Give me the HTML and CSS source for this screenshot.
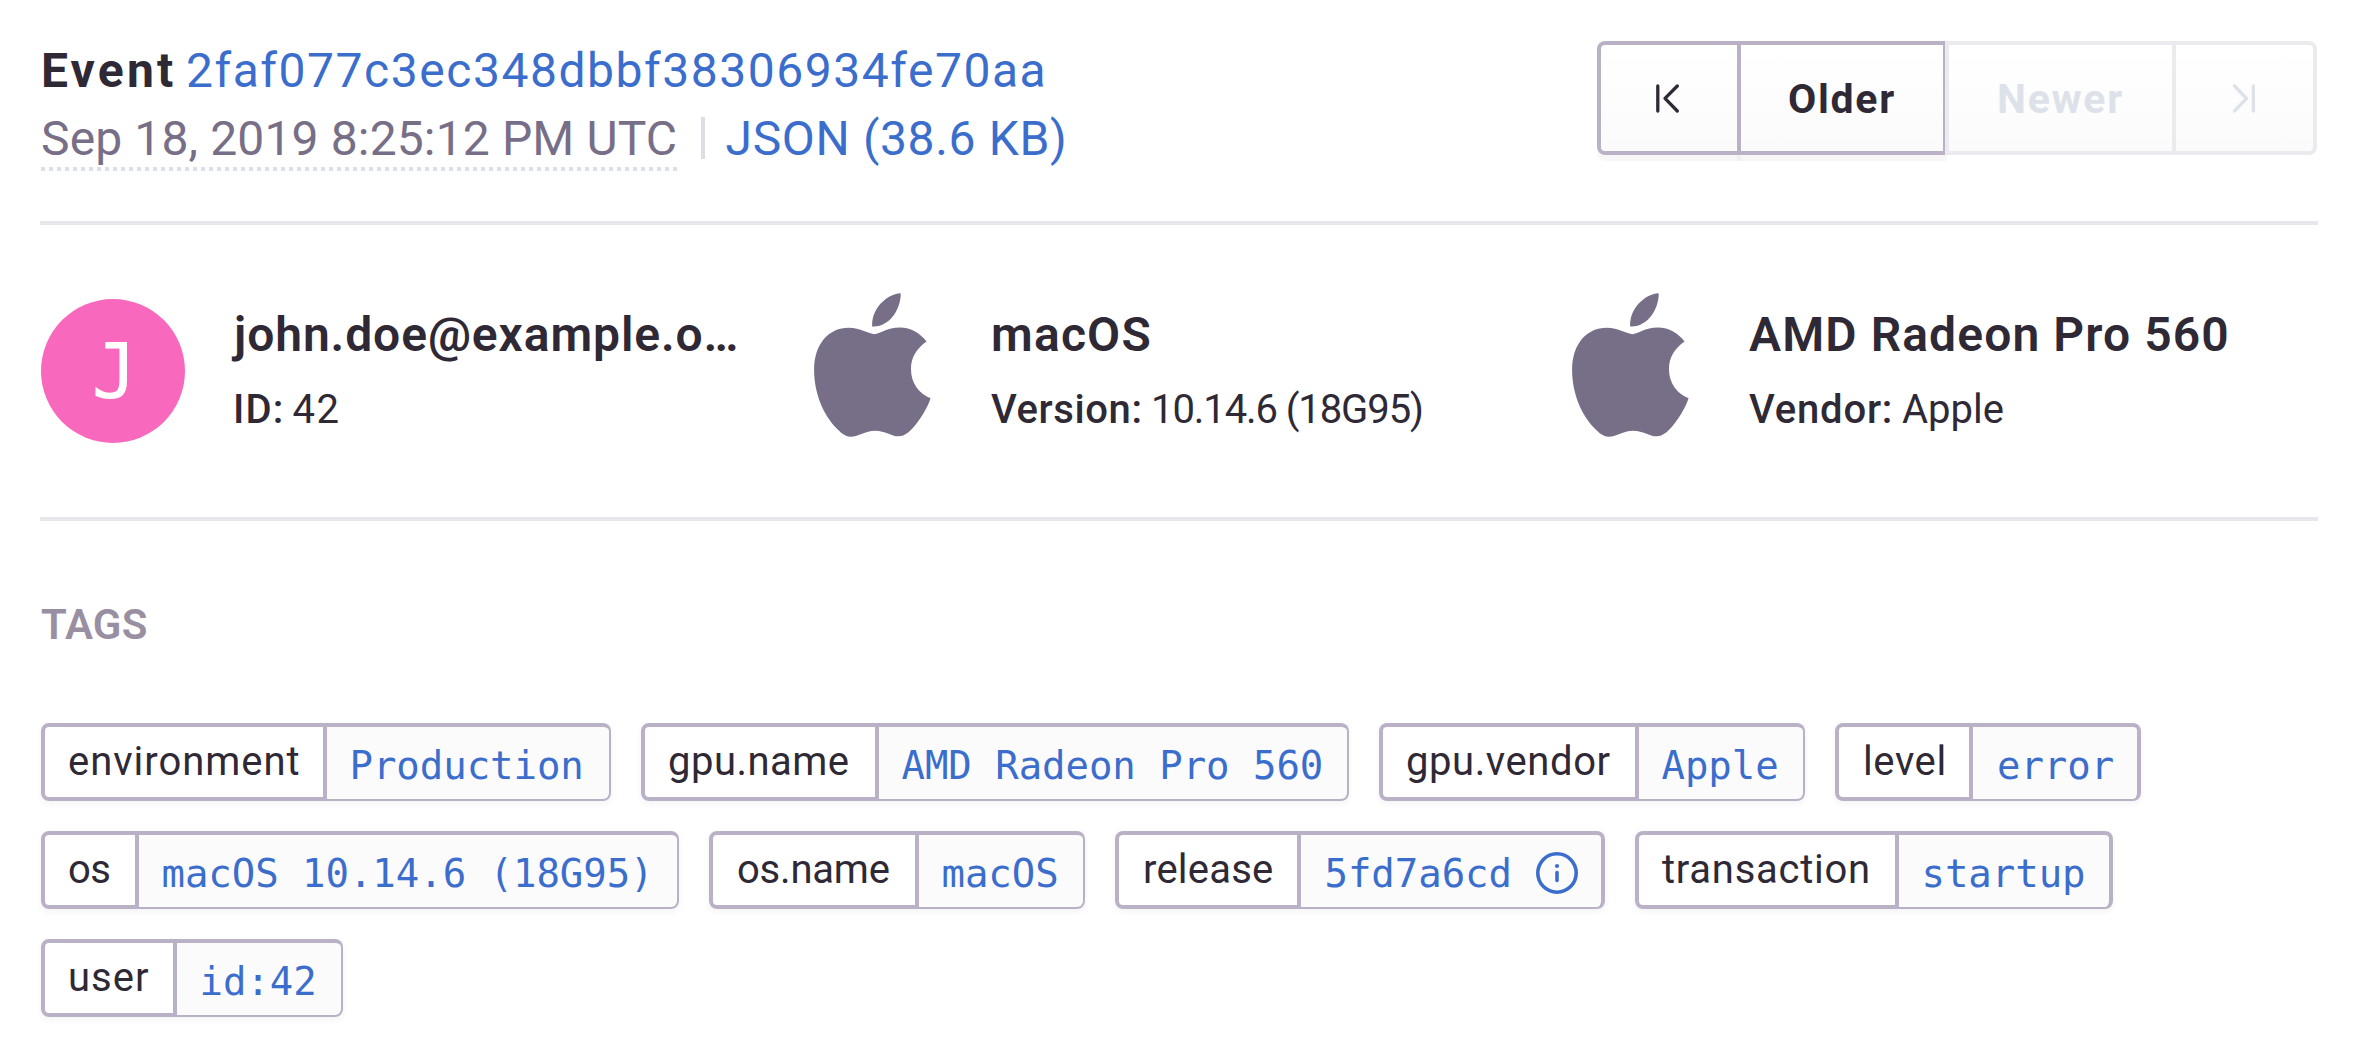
FILE: index.html
```
<!DOCTYPE html>
<html lang="en">
<head>
<meta charset="utf-8">
<title>Event details</title>
<link rel="stylesheet" href="styles.css">
</head>
<body>
<svg width="0" height="0" class="defs">
  <symbol id="apple" viewBox="42 38 352 434">
    <path d="M303 39C304 85 270 142 217 139C213 90 257 42 303 39Z"/>
    <path d="M224 162C240 162 262 142 300 142C335 142 362 160 381 184C352 204 334 230 334 267C334 310 358 341 393 355C384 383 360 424 336 449C325 460 313 470 297 470C274 470 257 453 226 453C194 453 178 471 152 471C135 471 122 458 108 444C70 405 42 340 42 270C42 190 88 143 146 143C182 143 207 162 224 162Z"/>
  </symbol>
</svg>
<header class="header">
  <div class="event">
    <div class="event-line"><strong class="event-label">Event</strong><a class="event-id">2faf077c3ec348dbbf38306934fe70aa</a></div>
    <div class="event-line"><span class="date">Sep 18, 2019 8:25:12 PM UTC</span><span class="separator"></span><a class="json">JSON (38.6 KB)</a></div>
  </div>
  <nav class="pager">
    <a class="button button-first"><svg width="28" height="32" viewBox="0 0 28 32"><path d="M2.8 3V28M22.3 3L10 15.4L22.3 28"/></svg></a>
    <a class="button button-older">Older</a>
    <a class="button button-newer disabled">Newer</a>
    <a class="button button-last disabled"><svg width="28" height="32" viewBox="0 0 28 32"><path d="M22.3 3V28M3.5 3L15.5 15.4L3.5 28"/></svg></a>
  </nav>
</header>
<section class="contexts">
  <div class="context">
    <div class="context-icon"><span class="avatar">J</span></div>
    <div class="context-body"><h3 class="email">john.doe@example.o…</h3><p><b class="label-id">ID:</b><span class="value-id">42</span></p></div>
  </div>
  <div class="context">
    <div class="context-icon"><svg class="apple"><use href="#apple"/></svg></div>
    <div class="context-body"><h3 class="os-title">macOS</h3><p><b class="label-version">Version:</b><span class="value-version">10.14.6 (18G95)</span></p></div>
  </div>
  <div class="context">
    <div class="context-icon"><svg class="apple"><use href="#apple"/></svg></div>
    <div class="context-body"><h3 class="gpu-title">AMD Radeon Pro 560</h3><p><b class="label-vendor">Vendor:</b><span>Apple</span></p></div>
  </div>
</section>
<section class="tags-section">
  <h2>TAGS</h2>
  <div class="tags">
    <div class="tag tag-environment"><span class="key">environment</span><a class="value">Production</a></div>
    <div class="tag tag-gpu-name"><span class="key">gpu.name</span><a class="value">AMD Radeon Pro 560</a></div>
    <div class="tag tag-gpu-vendor"><span class="key">gpu.vendor</span><a class="value">Apple</a></div>
    <div class="tag tag-level"><span class="key">level</span><a class="value wide-edge">error</a></div>
    <div class="tag tag-os"><span class="key">os</span><a class="value">macOS 10.14.6 (18G95)</a></div>
    <div class="tag tag-os-name"><span class="key">os.name</span><a class="value">macOS</a></div>
    <div class="tag tag-release"><span class="key">release</span><a class="value wide-edge">5fd7a6cd<svg class="info" width="42" height="42" viewBox="0 0 42 42"><circle cx="21" cy="21" r="19.2"/><path d="M21 20.5V28.5"/><circle class="dot" cx="21" cy="14" r="2.1"/></svg></a></div>
    <div class="tag tag-transaction"><span class="key">transaction</span><a class="value wide-edge">startup</a></div>
    <div class="tag tag-user"><span class="key">user</span><a class="value">id:42</a></div>
  </div>
</section>
</body>
</html>
```
FILE: styles.css
```
* { box-sizing: border-box; margin: 0; }
body {
  width: 2358px;
  height: 1058px;
  padding: 0 40px;
  background: #fff;
  color: #2f2936;
  font: 400 48px Roboto, sans-serif;
  overflow: hidden;
  white-space: nowrap;
}
.defs { display: block; height: 0; }
a { color: #3b6ecc; text-decoration: none; }

.header {
  display: flex;
  justify-content: space-between;
  height: 225px;
  padding: 37px 1px 0;
  border-bottom: 4px solid #e9e7ee;
}
.event-line { display: flex; height: 68px; line-height: 68px; }
.event-label { width: 145px; font-weight: 700; letter-spacing: 3.2px; }
.event-id { letter-spacing: 1.53px; }
.date {
  width: 636px;
  height: 66px;
  padding-top: 5px;
  line-height: 57px;
  letter-spacing: 0.14px;
  color: #776e87;
  background: repeating-linear-gradient(90deg, #dce1e9 0 4px, transparent 4px 8px) bottom / 100% 4px no-repeat;
}
.separator { width: 4px; height: 42px; margin: 12px 20.5px 0 24px; background: #dddde5; }
.json { letter-spacing: 0.65px; }

.pager { display: flex; height: 114px; margin-top: 4px; }
.button {
  display: flex;
  align-items: center;
  justify-content: center;
  padding-top: 2px;
  border: 4px solid #bbb1c7;
  background: linear-gradient(#fff, #fbfbfc);
  box-shadow: 0 6px 0 rgba(47, 41, 54, 0.035);
  color: #2f2936;
  font-size: 41px;
  font-weight: 700;
  letter-spacing: 1.7px;
}
.button svg { fill: none; stroke: currentColor; stroke-width: 3.3; stroke-linecap: round; stroke-linejoin: round; }
.button-first { width: 144px; border-radius: 8px 0 0 8px; }
.button-older { width: 210px; margin-left: -4px; }
.button-newer { width: 231px; margin-left: -2px; }
.button-last { width: 145px; margin-left: -4px; border-radius: 0 8px 8px 0; }
.disabled { position: relative; border-color: #ebebef; box-shadow: none; color: #dde2ea; }

.contexts {
  display: grid;
  grid-template-columns: 758px 758px 1fr;
  height: 296px;
  padding: 74px 0 0 1px;
  border-bottom: 4px solid #e9e7ee;
}
.context { display: flex; }
.context-icon { width: 192px; }
.avatar {
  display: block;
  width: 144px;
  height: 144px;
  padding: 1px 0 0 3px;
  border-radius: 50%;
  background: #f868bc;
  color: #fff;
  font: 76px/144px "DejaVu Sans Mono", monospace;
  text-align: center;
}
.apple { display: block; width: 117px; height: 144px; margin: -6px 0 0 15px; fill: #776e87; }
.context-body { padding-top: 8px; line-height: 56px; }
h3 { font-size: 48px; font-weight: 600; }
p { display: flex; margin-top: 19px; font-size: 40px; }
b { font-weight: 500; }
.email { padding-left: 1px; letter-spacing: 0.9px; }
.os-title { letter-spacing: 1.2px; }
.gpu-title { letter-spacing: 1.1px; }
.label-id { width: 59.5px; letter-spacing: 1.2px; }
.value-id { letter-spacing: 1.6px; }
.label-version { width: 160px; letter-spacing: 0.6px; }
.value-version { letter-spacing: -1.09px; }
.label-vendor { width: 153px; letter-spacing: 0.8px; }

.tags-section { padding: 80px 0 0 1px; }
h2 { font-size: 42px; font-weight: 600; line-height: 48px; letter-spacing: 0.2px; color: #998fa2; }
.tags { display: flex; flex-wrap: wrap; gap: 30px; margin-top: 74px; }
.tag {
  display: grid;
  height: 78px;
  border-radius: 8px;
  box-shadow: 0 3px 6px rgba(47, 41, 54, 0.05);
}
.key, .value { display: flex; align-items: center; border: 4px solid #bbb1c7; }
.key { padding: 0 0 1px 23px; border-radius: 8px 0 0 8px; font-size: 40px; }
.value {
  padding: 4px 0 0 22.5px;
  border-width: 4px 2px 2px 0;
  border-radius: 0 8px 8px 0;
  background: #fbfbfc;
  font: 39px "DejaVu Sans Mono", monospace;
  letter-spacing: -0.05px;
}
.wide-edge { border-right-width: 4px; }
.info { margin-left: 24px; fill: none; stroke: currentColor; stroke-width: 3.6; stroke-linecap: round; }
.info .dot { fill: currentColor; stroke: none; }

.tag-environment { grid-template-columns: 286px 284px; }
.tag-environment .key { letter-spacing: 0.97px; }
.tag-gpu-name { grid-template-columns: 238px 470px; }
.tag-gpu-name .key { letter-spacing: 0.48px; }
.tag-gpu-vendor { grid-template-columns: 260px 166px; }
.tag-gpu-vendor .key { letter-spacing: 0.58px; }
.tag-level { grid-template-columns: 138px 168px; }
.tag-level .key { padding-left: 24px; letter-spacing: 0.6px; }
.tag-level .value { padding-left: 24px; }
.tag-os { grid-template-columns: 98px 540px; }
.tag-os .key { letter-spacing: -0.5px; }
.tag-os-name { grid-template-columns: 210px 166px; }
.tag-os-name .key { padding-left: 24px; letter-spacing: -0.2px; }
.tag-release { grid-template-columns: 186px 304px; }
.tag-release .key { padding-left: 24px; letter-spacing: 0.21px; }
.tag-release .value { padding-left: 23.5px; }
.tag-transaction { grid-template-columns: 264px 214px; }
.tag-transaction .key { letter-spacing: 0.74px; }
.tag-user { grid-template-columns: 136px 166px; }
.tag-user .key { letter-spacing: 1.06px; }
```
